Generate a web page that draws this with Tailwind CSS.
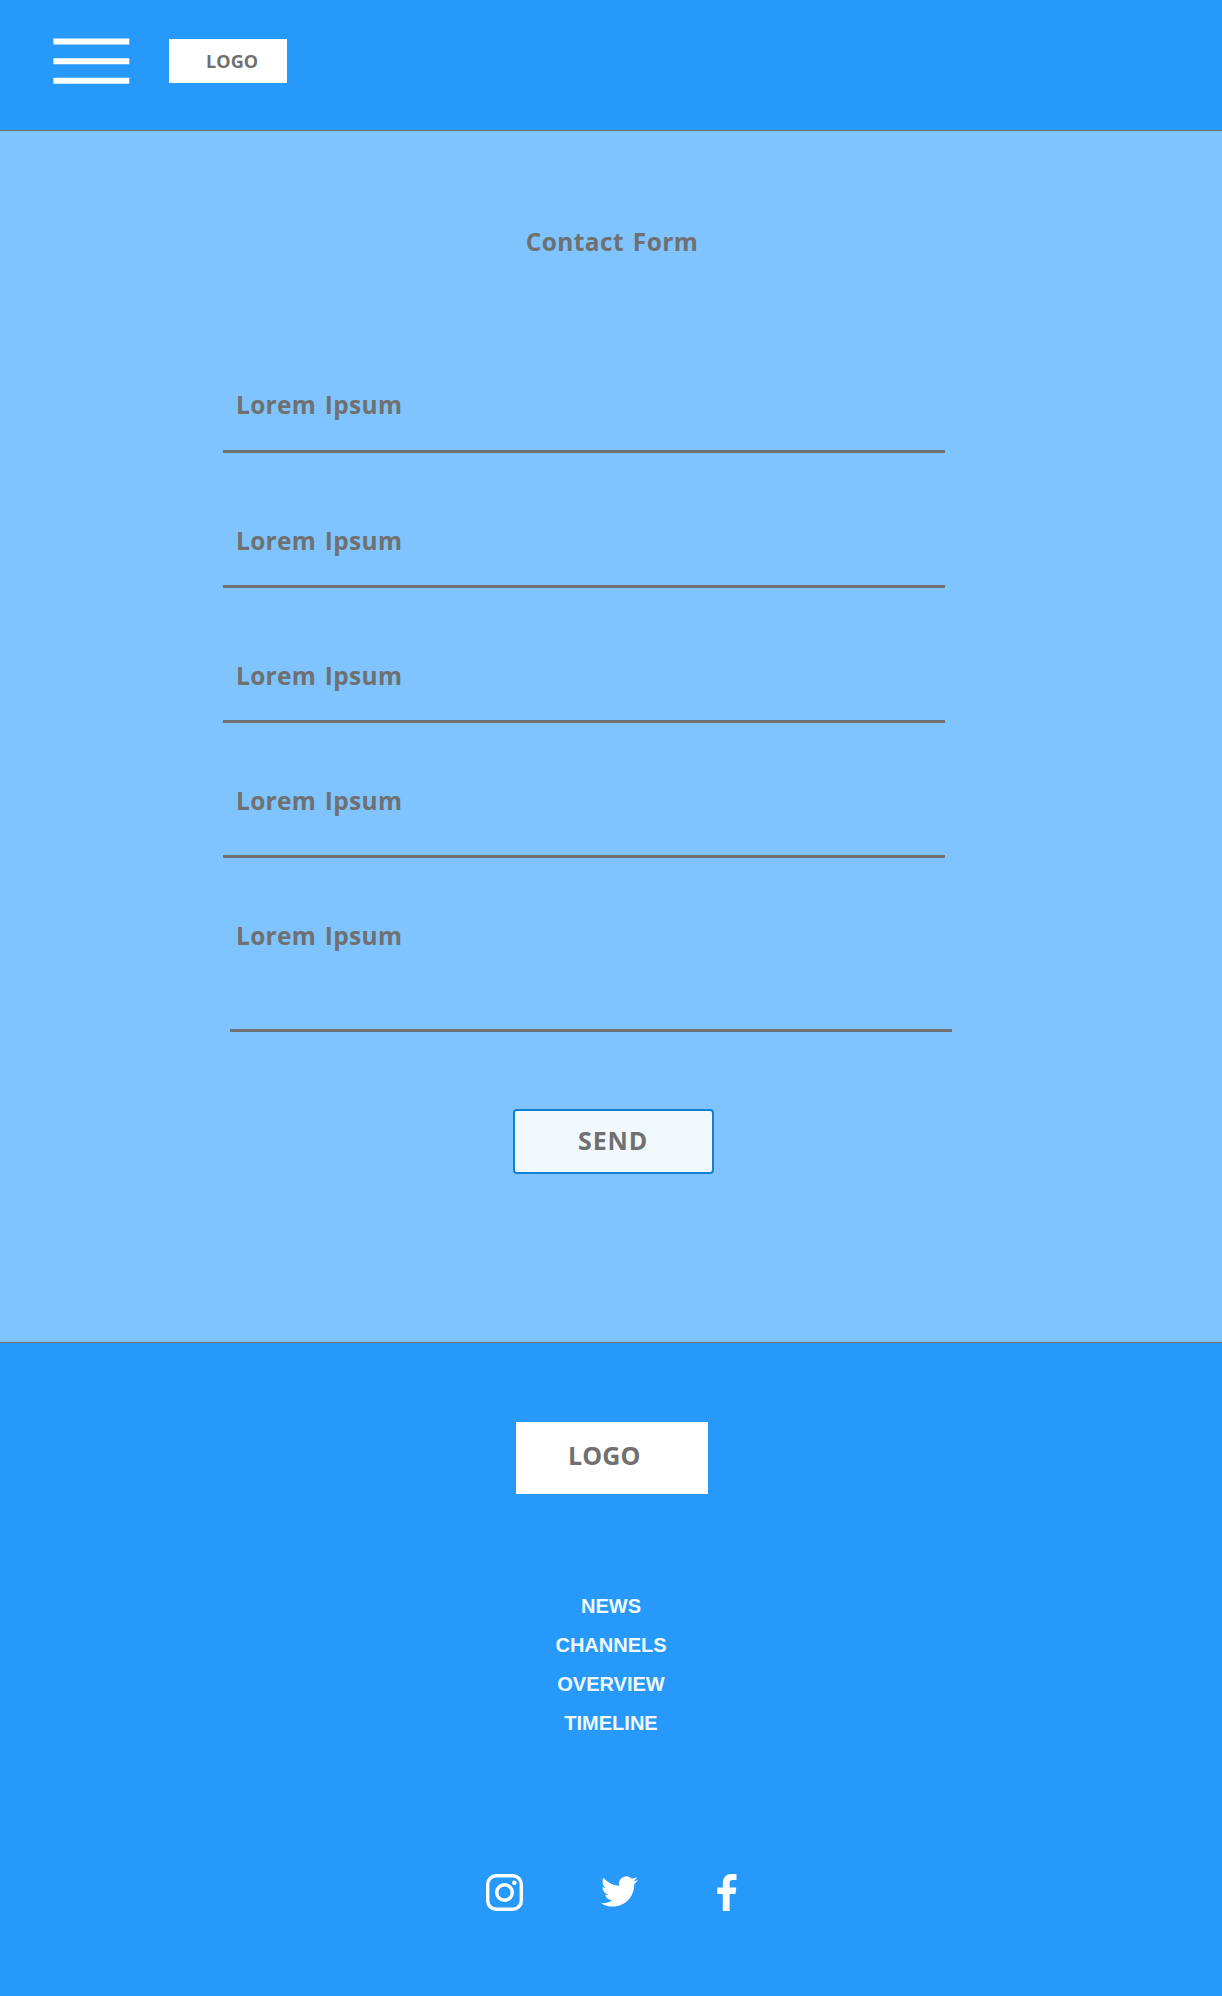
<!DOCTYPE html>
<html lang="en">
<head>
<meta charset="utf-8">
<title>Contact Form</title>
<script src="https://cdn.jsdelivr.net/npm/@tailwindcss/browser@4"></script>
</head>
<body class="flex h-[1996px] w-[1222px] flex-col overflow-x-hidden bg-[#2699fb] font-['Open_Sans',sans-serif] font-bold text-[#707070]">
  <header class="flex h-[131px] shrink-0 items-start border-b border-[#707070] bg-[#2699fb] pl-[53px]">
    <button class="mt-[38px] block h-[46px] w-[77px]" aria-label="Menu">
      <svg class="block" width="77" height="46" viewBox="0 0 77 46" fill="none" stroke="#fff" stroke-width="6"><path d="M.4 3.600h75.900M.4 23.200h75.900M.4 42.700h75.900"/></svg>
    </button>
    <a class="mt-[39px] ml-[39px] flex h-[44px] w-[118px] bg-white pl-[37px] text-[18px] leading-[44px] tracking-[0.1px]">LOGO</a>
  </header>

  <main class="h-[1211px] shrink-0 bg-[#7fc4ff] pt-[91px]">
    <h1 class="pl-[2px] text-center text-[24.5px] leading-[40px] tracking-[0.4px] [word-spacing:2px]">Contact Form</h1>
    <form class="ml-[222.5px] w-[722px] pt-[123px] text-[24.5px] leading-[40px] tracking-[0.3px] [word-spacing:2px]">
      <div class="h-[68px] border-b-3 border-[#707070] pl-[13.5px]">Lorem Ipsum</div>
      <div class="mt-[68px] h-[67px] border-b-3 border-[#707070] pl-[13.5px]">Lorem Ipsum</div>
      <div class="mt-[68px] h-[67px] border-b-3 border-[#707070] pl-[13.5px]">Lorem Ipsum</div>
      <div class="mt-[58px] h-[77px] border-b-3 border-[#707070] pl-[13.5px]">Lorem Ipsum</div>
      <div class="mt-[58px] h-[113px] pl-[13.5px]">Lorem Ipsum</div>
      <div class="ml-[7px] h-[3px] w-[722px] bg-[#707070]"></div>
      <button type="button" class="mt-[77px] ml-[290.5px] block h-[65px] w-[201px] rounded-[4px] border-2 border-[#1280d4] bg-[#f1f9ff] pb-[3px] pl-[63px] text-left text-[25px] tracking-[0.9px]">SEND</button>
    </form>
  </main>

  <footer class="flex grow flex-col items-center border-t border-[#707070]">
    <div class="mt-[79px] ml-[2px] h-[72px] w-[192px] bg-white pl-[52px] text-[25px] leading-[66px] tracking-[0.1px]">LOGO</div>
    <nav class="mt-[93px] flex flex-col items-center font-['Liberation_Sans',Arial,sans-serif] text-[20px] leading-[39px] text-[#f1f9ff]">
      <a>NEWS</a>
      <a>CHANNELS</a>
      <a>OVERVIEW</a>
      <a>TIMELINE</a>
    </nav>
    <div class="mt-[131px] flex w-[251px] items-start justify-between">
      <svg width="37" height="37" viewBox="0 0 37 37" fill="none" stroke="#fff" stroke-width="3.4"><rect x="1.7" y="1.7" width="33.6" height="33.6" rx="8.6"/><circle cx="18.5" cy="18.5" r="7.8"/><circle cx="28.3" cy="8.7" r="2.3" fill="#fff" stroke="none"/></svg>
      <svg class="-mt-px" width="37" height="37" viewBox="0 0 24 24" fill="#fff"><path d="M23.953 4.57a10 10 0 01-2.825.775 4.958 4.958 0 002.163-2.723c-.951.555-2.005.959-3.127 1.184a4.92 4.92 0 00-8.384 4.482C7.69 8.095 4.067 6.13 1.64 3.162a4.822 4.822 0 00-.666 2.475c0 1.71.87 3.213 2.188 4.096a4.904 4.904 0 01-2.228-.616v.06a4.923 4.923 0 003.946 4.827 4.996 4.996 0 01-2.212.085 4.936 4.936 0 004.604 3.417 9.867 9.867 0 01-6.102 2.105c-.39 0-.779-.023-1.17-.067a13.995 13.995 0 007.557 2.209c9.053 0 13.998-7.496 13.998-13.985 0-.21 0-.42-.015-.63A9.935 9.935 0 0024 4.59z"/></svg>
      <svg width="20" height="37" viewBox="0 0 20 37" fill="#fff"><path d="M5.8 37V20H.3v-6.500h5.500V9.200C5.800 3.300 9.300 0 14.600 0c2 0 3.900.1 4.900.2v5.900h-3.300c-3 0-3.600 1.400-3.600 3.500v3.900h6.700L18.400 20h-5.800v17z"/></svg>
    </div>
  </footer>
</body>
</html>
